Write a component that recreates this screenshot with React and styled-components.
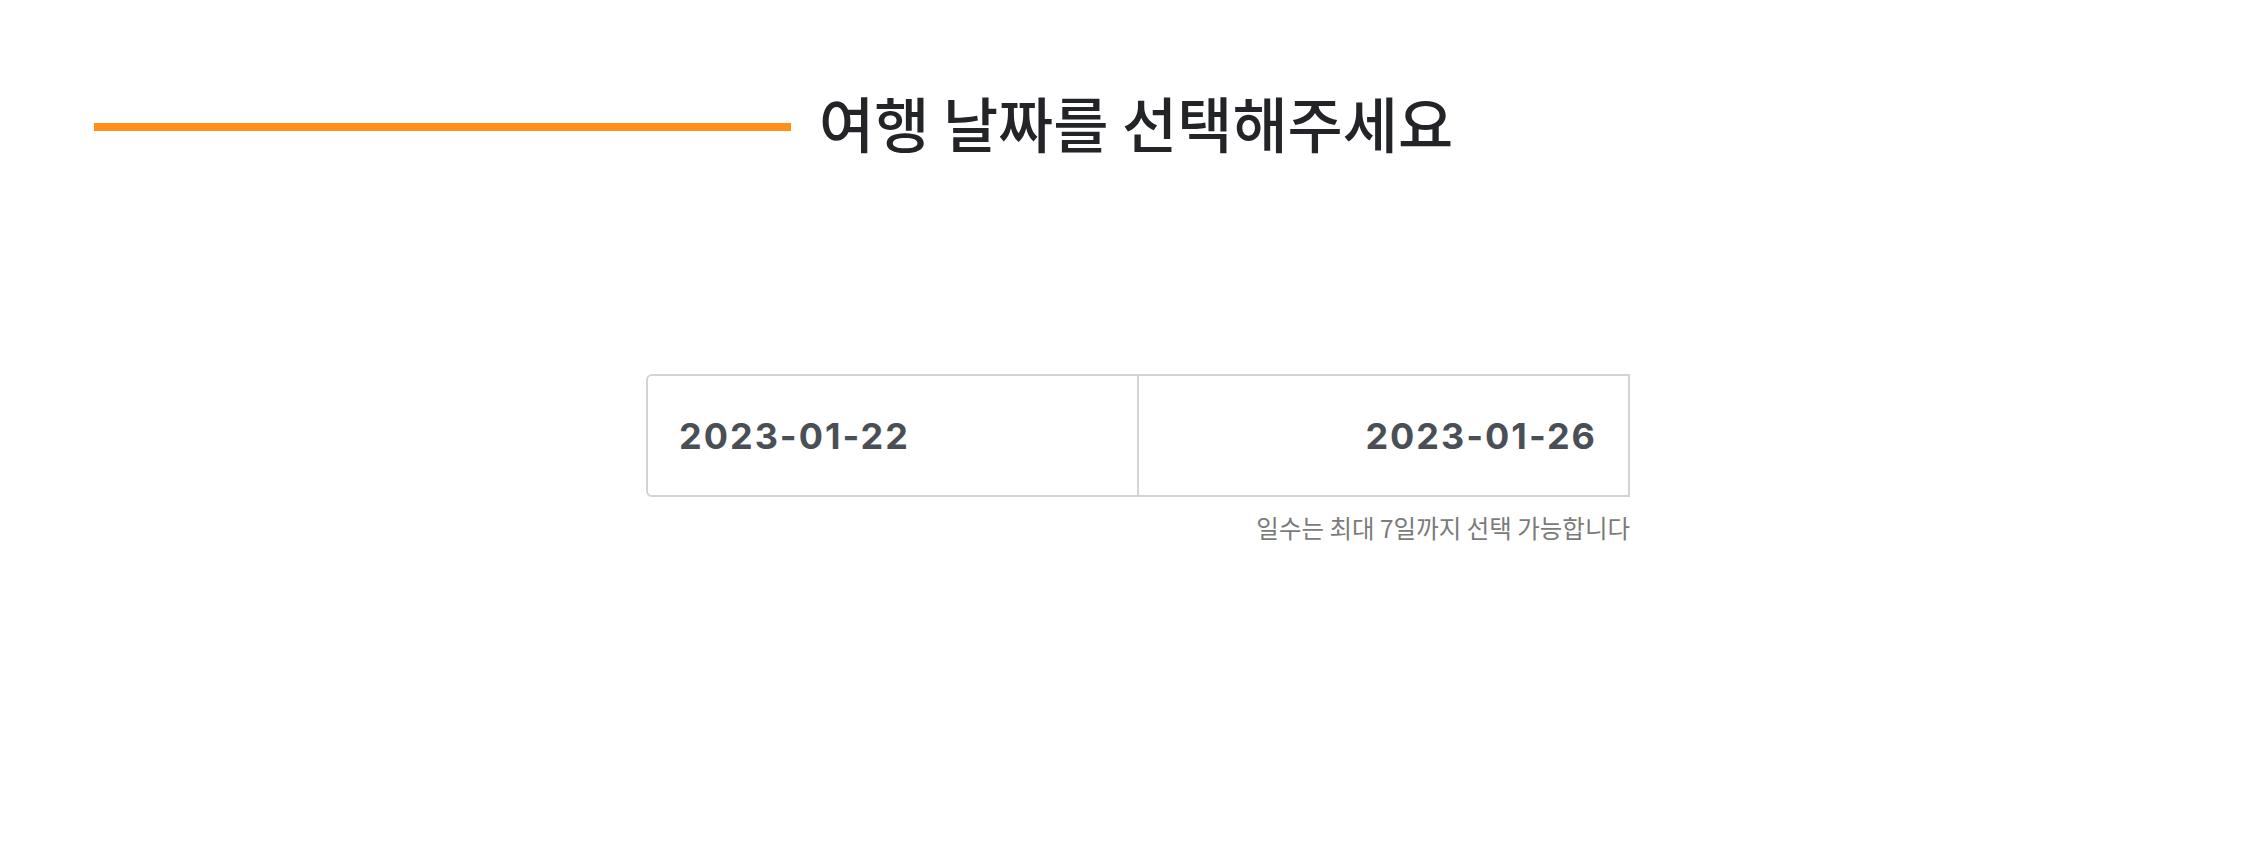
import React from 'react'
import styled, { createGlobalStyle } from 'styled-components'

const GlobalStyle = createGlobalStyle`
  html, body {
    margin: 0;
    padding: 0;
    background: #ffffff;
  }
  body {
    font-family: "Noto Sans CJK KR", "Noto Sans", sans-serif;
  }
`

const Page = styled.div`
  width: 2246px;
  height: 848px;
  box-sizing: border-box;
  padding-top: 86px;
`

const TitleRow = styled.div`
  display: flex;
  align-items: center;
  gap: 28px;
  padding-left: 94px;
`

const Bar = styled.div`
  width: 697px;
  height: 8px;
  background: #ff8f17;
`

const Title = styled.h1`
  margin: 0 0 10px;
  font-family: "Noto Sans CJK KR", sans-serif;
  font-size: 60px;
  font-weight: 500;
  line-height: 72px;
  color: #222428;
  letter-spacing: 0;
`

const Picker = styled.div`
  margin: 206px 0 0 646px;
  width: 984px;
`

const Fields = styled.div`
  display: flex;
`

const DateField = styled.div`
  flex: 1;
  height: 123px;
  box-sizing: border-box;
  display: flex;
  align-items: center;
  justify-content: ${p => (p.$end ? 'flex-end' : 'flex-start')};
  padding: 0 31px 0 31px;
  border: 2px solid #d3d3d3;
  border-left-width: ${p => (p.$end ? '0' : '2px')};
  border-radius: ${p => (p.$end ? '0' : '6px 0 0 6px')};
  font-family: Inter, "Liberation Sans", sans-serif;
  font-size: 36px;
  font-weight: 700;
  letter-spacing: 2px;
  color: #4a4f56;
`

const Hint = styled.p`
  margin: 13px 0 0;
  text-align: right;
  font-family: "Noto Sans CJK KR", sans-serif;
  font-size: 24.5px;
  color: #7b7b7b;
`

export default function App() {
  return (
    <Page>
      <GlobalStyle />
      <TitleRow>
        <Bar />
        <Title>여행 날짜를 선택해주세요</Title>
      </TitleRow>
      <Picker>
        <Fields>
          <DateField>2023-01-22</DateField>
          <DateField $end>2023-01-26</DateField>
        </Fields>
        <Hint>일수는 최대 7일까지 선택 가능합니다</Hint>
      </Picker>
    </Page>
  )
}
